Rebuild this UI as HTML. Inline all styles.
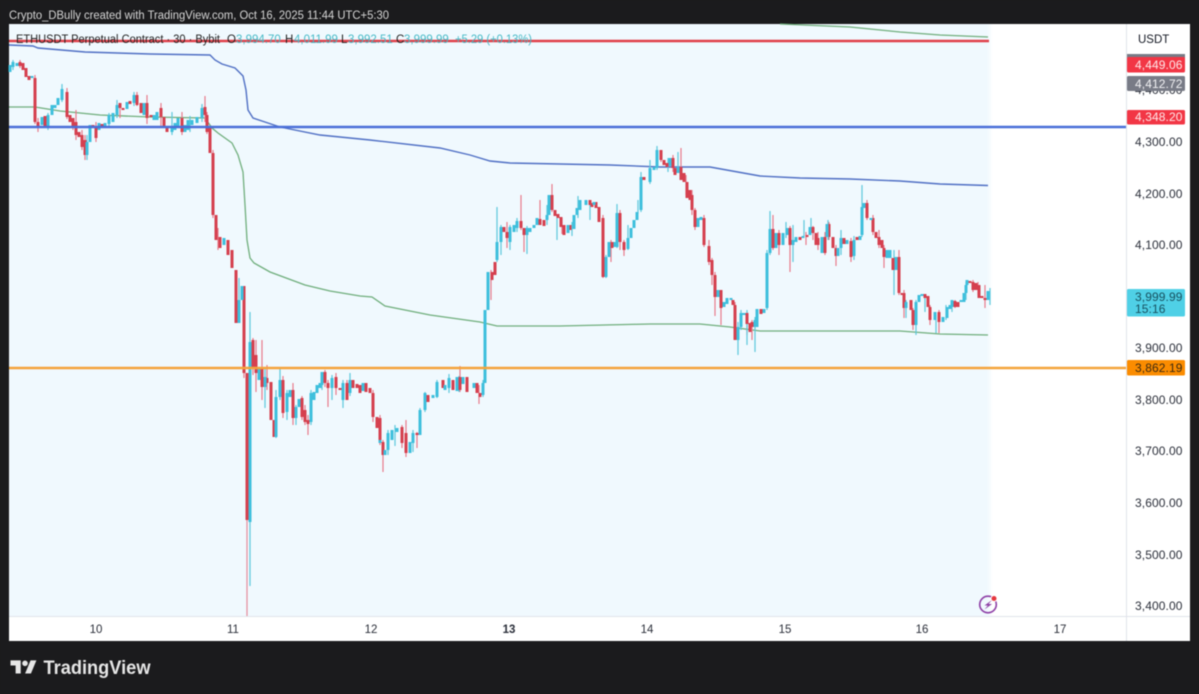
<!DOCTYPE html>
<html><head><meta charset="utf-8"><style>
html,body{margin:0;padding:0;background:#1b1b1d;width:1199px;height:694px;overflow:hidden}
svg{display:block;filter:blur(.4px)}
text{font-family:"Liberation Sans",sans-serif}
</style></head><body>
<svg width="1199" height="694" viewBox="0 0 1199 694" xmlns="http://www.w3.org/2000/svg">
<defs><linearGradient id="g" x1="0" x2="1" y1="0" y2="0"><stop offset="0" stop-color="#f0f9fe"/><stop offset="1" stop-color="#ffffff"/></linearGradient></defs>
<rect width="1199" height="694" fill="#1b1b1d"/>
<rect x="9" y="24" width="1181" height="617" fill="#fff"/>
<rect x="9" y="24" width="978" height="592" fill="#f0f9fe"/>
<rect x="987" y="24" width="6" height="592" fill="url(#g)"/>
<path d="M1126.5 24V641M9 616.5H1190" stroke="#e0e3eb" stroke-width="1" fill="none"/>
<text x="9" y="19" font-size="11.5" fill="#d6d6d6" textLength="380" lengthAdjust="spacingAndGlyphs">Crypto_DBully created with TradingView.com, Oct 16, 2025 11:44 UTC+5:30</text>

<path d="M780 24L850 27L900 32L940 35L988 37" stroke="#6fae7c" stroke-width="1.3" fill="none"/>
<path d="M9 107L35 107L60 111L100 115L150 117L205 118L212 128L218 133L232 143L238 155L243 172L245 205L247 240L250 258L254 263L270 272L305 285L330 291L360 296L372 297L385 306L430 315L480 322L497 326L560 326L650 324L700 324L730 327L760 331L900 331L940 334L988 335" stroke="#6fae7c" stroke-width="1.3" fill="none"/>
<path d="M9 45L33 46L38 48L85 52L150 54L210 55L215 60L222 64L235 68L243 76L246 90L248 110L253 118L280 127L320 135L370 140L440 148L470 155L490 161L510 163L560 164L610 165L660 167L710 167L760 176L800 178L850 179L900 181L940 184L988 185.5" stroke="#4f6fc4" stroke-width="1.4" fill="none"/>

<path fill="none" stroke="#e87a8a" stroke-width="1.2" d="M20 60V68M35 75V124M38 118V132M67 88V119M73 118V130M76 110V140M82 130V150M85 135V160M96 122V142M120 103V118M137 92V106M147 95V124M161 103V126M182 112V135M205 96V122M207 112V134M213 150V218M218 228V250M244 330V378M253 338V375M256 340V392M262 340V400M267 365V390M283 376V418M293 383V425M302 396V420M305 405V425M308 415V435M325 370V387M328 380V407M336 373V395M347 380V400M373 390V422M380 415V445M383 440V472M402 425V448M406 420V457M417 432V448M460 366V392M479 385V404M491 270V300M507 222V248M521 195V230M524 228V252M540 200V225M552 184V212M562 218V234M603 215V278M611 240V262M620 210V250M624 240V256M661 150V162M673 155V172M681 148V180M686 175V195M692 190V215M695 208V230M704 215V247M709 240V265M712 258V285M715 272V316M721 290V325M735 302V340M747 312V335M752 320V340M773 215V250M779 230V255M790 226V272M806 232V245M813 226V240M818 232V250M825 232V255M829 222V240M836 245V266M851 238V262M867 200V220M873 215V235M879 230V248M884 245V268M899 250V295M904 290V318M913 308V330M930 305V325M939 310V333M955 300V308M973 280V292M978 282V295M985 285V308"/>
<path fill="none" stroke="#5cc8dc" stroke-width="1.2" d="M13 60V70M48 113V130M62 84V102M87 135V160M109 113V126M117 100V118M134 92V106M172 112V135M190 116V132M202 104V122M239 278V323M250 312V586M265 367V408M276 390V438M280 368V400M287 390V420M296 405V425M311 390V425M322 372V390M332 375V400M343 380V408M350 373V396M388 430V455M395 425V446M413 430V452M420 408V435M425 392V412M437 380V398M449 374V393M459 376V392M483 380V397M497 207V262M501 225V255M510 225V250M517 218V232M527 226V254M547 205V225M557 214V240M572 222V236M578 196V218M590 205V220M606 255V278M617 204V248M628 225V250M638 200V214M641 172V212M650 160V184M657 146V170M668 158V172M678 152V168M747 310V345M738 322V355M741 310V330M755 317V352M767 250V310M770 211V255M786 222V238M793 225V262M804 220V236M811 218V234M828 220V240M841 230V255M854 236V260M862 185V237M894 250V295M906 300V318M916 300V335M925 296V312M936 315V333M946 305V320M952 300V312M966 282V300M990 288V305"/>
<path fill="none" stroke="#d5404f" stroke-width="3" d="M20 62V66M23 63V70M26 68V77M29 76V80M35 78V122M38 122V128M45 116V126M67 92V117M70 115V122M73 118V126M76 122V135M79 132V137M82 135V147M85 140V155M93 125V128M96 128V138M102 124V127M120 103V108M123 108V110M130 101V104M137 95V105M141 103V113M147 103V118M151 115V117M161 108V117M164 117V127M167 127V132M182 118V132M205 107V115M207 115V132M210 128V153M213 153V215M216 215V240M220 237V248M228 240V255M232 250V268M236 270V323M244 286V373M247 373V520M253 340V367M256 355V373M262 367V387M267 378V383M271 382V420M274 420V437M283 380V413M293 390V418M302 398V417M305 410V422M308 420V424M325 372V383M328 383V388M336 377V388M340 388V390M347 383V400M353 380V388M357 384V388M360 385V393M366 383V392M370 388V393M373 393V417M377 417V428M380 418V442M383 442V455M402 427V443M406 433V453M417 433V435M428 395V402M443 380V388M453 380V390M460 377V390M467 377V392M477 383V393M480 393V397M492 272V280M495 262V275M504 227V232M507 232V238M521 221V228M524 228V235M540 219V225M544 220V226M552 195V210M555 210V216M558 214V218M561 217V227M564 225V235M570 225V230M590 200V205M596 202V208M592 203V207M599 207V222M603 218V277M612 242V248M620 213V242M624 242V250M644 177V180M661 150V160M664 160V165M667 163V167M673 158V168M675 168V175M681 167V180M684 173V182M687 182V198M690 190V200M692 195V210M695 210V227M704 218V245M709 246V262M712 260V275M715 275V297M721 290V308M733 300V305M735 305V340M747 313V324M750 323V332M752 322V327M761 309V314M773 229V248M779 233V245M790 228V245M800 237V240M807 235V237M813 227V233M816 233V245M818 238V245M825 237V253M829 224V237M833 237V248M836 248V256M844 238V244M851 241V257M857 237V240M867 203V218M873 218V232M876 232V238M879 237V245M882 240V248M884 248V257M893 258V270M899 257V293M902 293V295M904 293V308M911 300V310M913 310V325M925 294V298M928 296V307M930 307V320M939 312V322M955 301V307M958 302V307M970 281V283M973 282V290M976 283V290M979 285V298M982 296V298M985 298V300"/>
<path fill="none" stroke="#3fbfdc" stroke-width="3" d="M10 65V72M13 62V67M17 63V66M32 76V78M42 117V125M48 115V126M52 105V115M55 105V108M58 98V105M62 89V100M87 142V155M90 125V142M99 123V130M105 123V126M109 115V124M113 113V122M117 105V115M127 102V109M134 95V103M144 103V115M154 115V120M157 112V120M172 127V132M175 123V130M178 118V127M185 125V132M188 120V130M192 120V125M197 117V123M202 108V118M224 238V245M239 300V323M242 286V300M250 342V522M259 367V380M265 377V387M276 397V437M280 380V397M287 393V412M290 390V397M296 407V418M299 399V407M311 393V422M314 392V400M317 385V393M320 383V388M322 372V385M332 378V388M343 383V400M350 380V393M363 383V391M380 440V443M385 450V455M388 433V450M392 430V440M397 428V432M410 442V453M413 433V443M420 410V435M425 393V410M433 395V398M437 382V397M445 385V390M449 378V388M457 377V391M463 377V384M474 383V388M483 383V395M485 310V383M488 272V310M497 242V260M501 227V242M510 227V242M514 225V232M517 221V228M527 228V235M530 228V232M534 225V228M537 218V225M547 215V220M549 195V215M568 225V233M574 215V229M577 208V215M580 200V210M586 200V205M594 202V205M606 257V277M609 242V257M615 242V247M617 213V247M628 238V249M631 228V238M634 220V228M637 212V220M641 177V210M650 168V182M654 167V170M657 150V168M670 158V166M678 167V173M698 218V227M701 217V220M718 290V297M724 302V307M727 298V304M731 298V300M738 327V340M741 313V327M744 313V315M755 320V327M757 309V327M764 309V313M767 253V308M770 229V253M776 233V248M783 233V245M787 228V235M793 240V245M796 237V242M803 236V238M810 227V235M822 237V253M827 224V237M838 248V256M841 238V248M847 240V244M854 240V256M860 236V240M862 207V235M864 203V208M871 218V220M887 250V258M890 250V258M896 257V270M906 302V308M916 302V325M919 295V302M922 294V296M935 312V320M943 317V322M947 307V318M950 305V309M952 300V307M961 300V302M964 293V302M966 285V293M967 280V285M988 291V300"/>
<path d="M247 520V616" stroke="#e58a9a" stroke-width="1.2"/>

<path d="M9 41H989" stroke="#e0404a" stroke-width="2.400"/>
<path d="M9 127H1126" stroke="#4a6fd8" stroke-width="2.400"/>
<path d="M9 368H1126" stroke="#f4a43c" stroke-width="2.400"/>

<text x="16" y="43" font-size="11.5" fill="#222" textLength="204" lengthAdjust="spacingAndGlyphs">ETHUSDT Perpetual Contract · 30 · Bybit</text>
<g font-size="11.5" fill="#222"><text x="227" y="43">O</text><text x="285" y="43">H</text><text x="341" y="43">L</text><text x="396" y="43">C</text></g>
<g font-size="11.5" fill="#45b9c6"><text x="236" y="43">3,994.70</text><text x="294" y="43">4,011.99</text><text x="348" y="43">3,992.51</text><text x="404" y="43">3,999.99</text><text x="455" y="43" textLength="77" lengthAdjust="spacingAndGlyphs">+5.29 (+0.13%)</text></g>

<text x="1138" y="43" font-size="11.5" fill="#131722">USDT</text>
<g font-size="12" fill="#2a2e39" letter-spacing=".1">
<text x="1135" y="94">4,400.00</text>
<text x="1135" y="146">4,300.00</text><text x="1135" y="198">4,200.00</text><text x="1135" y="249">4,100.00</text><text x="1135" y="352">3,900.00</text><text x="1135" y="404">3,800.00</text><text x="1135" y="455">3,700.00</text><text x="1135" y="507">3,600.00</text><text x="1135" y="559">3,500.00</text><text x="1135" y="610">3,400.00</text>
</g>
<rect x="1127" y="54" width="58" height="6" fill="#787b86"/>
<rect x="1127" y="57" width="58" height="15.500" rx="1.500" fill="#f23645"/>
<rect x="1127" y="76" width="58" height="15" rx="1.500" fill="#787b86"/>
<rect x="1127" y="110" width="58" height="14.500" rx="1.500" fill="#f23645"/>
<rect x="1127" y="289" width="58" height="27.500" rx="1.500" fill="#4fd0e6"/>
<rect x="1127" y="360" width="58" height="15.500" rx="1.500" fill="#fb8c00"/>
<g font-size="12">
<text x="1135" y="69" fill="#ffe9ea" letter-spacing=".1">4,449.06</text>
<text x="1135" y="88" fill="#f2f2f4" letter-spacing=".1">4,412.72</text>
<text x="1135" y="121" fill="#ffe9ea" letter-spacing=".1">4,348.20</text>
<text x="1135" y="301" fill="#17505f" letter-spacing=".1">3,999.99</text>
<text x="1135" y="313" fill="#17505f" letter-spacing=".1">15:16</text>
<text x="1135" y="372" fill="#3d2a10" letter-spacing=".1">3,862.19</text>
</g>

<g font-size="11.500" fill="#2a2e39" text-anchor="middle">
<text x="96" y="633">10</text><text x="233" y="633">11</text><text x="371" y="633">12</text><text x="509" y="633" font-weight="bold">13</text><text x="647" y="633">14</text><text x="785" y="633">15</text><text x="922" y="633">16</text><text x="1060" y="633">17</text>
</g>

<circle cx="988" cy="604.500" r="8.300" fill="none" stroke="#8e3fa6" stroke-width="1.600"/>
<circle cx="994" cy="598.500" r="3.500" fill="#fff"/>
<circle cx="994" cy="598.500" r="2.500" fill="#e5373f"/>
<path d="M992 600L984.500 605.500H987.800L984.500 609.500L992 604H988.500Z" fill="#8e3fa6"/>

<path transform="translate(10.500 657.500) scale(.73)" fill="#e6e6e6" d="M14 22H7V11H0V4h14v18zM28 22h-8l7.500-18h8L28 22z"/>
<circle cx="25" cy="663.300" r="2.800" fill="#e6e6e6"/>
<text x="43.500" y="674" font-size="19" font-weight="bold" fill="#e6e6e6" textLength="107" lengthAdjust="spacingAndGlyphs">TradingView</text>
</svg>
</body></html>
